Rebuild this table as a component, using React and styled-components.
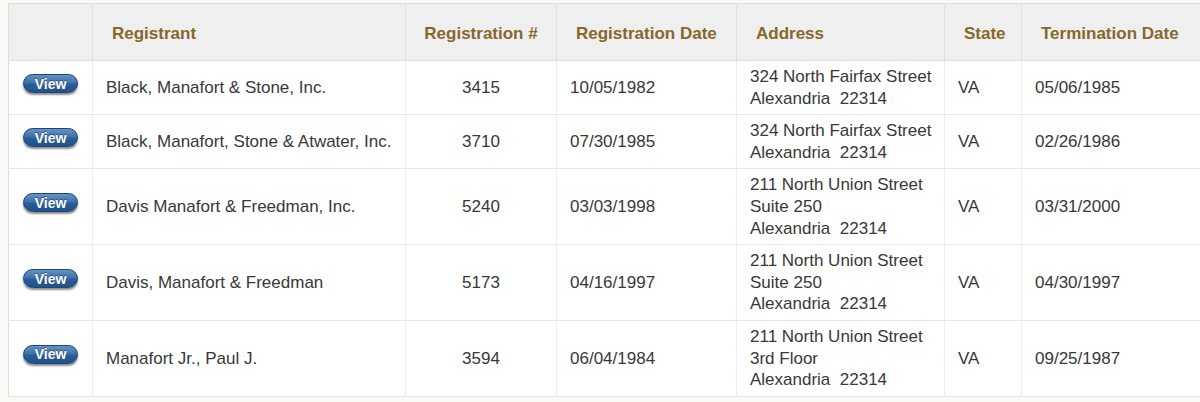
import React from "react";
import styled, { createGlobalStyle } from "styled-components";

const Global = createGlobalStyle`
  html, body { margin: 0; padding: 0; background: #f9f9f6; overflow: hidden; }
  body { font-family: "Liberation Sans", Arial, Helvetica, sans-serif; }
`;

const Page = styled.div`
  padding: 3px 0 0 8px;
  width: 1220px;
`;

const Table = styled.table`
  border-collapse: collapse;
  table-layout: fixed;
  width: 1210px;
  background: #fff;
  border-top: 1px solid #dcdcdc;
  border-left: 1px solid #dcdcdc;
`;

const Th = styled.th`
  background: #efefef;
  color: #86692a;
  font-weight: bold;
  font-size: 17px;
  height: 53px;
  padding: 3px 0 0 ${(p) => (p.$center ? 0 : 19)}px;
  text-align: ${(p) => (p.$center ? "center" : "left")};
  vertical-align: middle;
  border-right: 1px solid #e2e2e2;
  border-bottom: 1px solid #dedede;
  white-space: nowrap;
`;

const Td = styled.td`
  color: #383838;
  font-size: 17px;
  line-height: 21.6px;
  padding: 5px 0 5px ${(p) => (p.$center ? 0 : 13)}px;
  text-align: ${(p) => (p.$center ? "center" : "left")};
  vertical-align: middle;
  border-right: 1px solid #ececec;
  border-bottom: 1px solid #e6e6e6;
  white-space: pre;
`;

const ViewCell = styled.td`
  text-align: center;
  vertical-align: middle;
  padding: 0 0 8px 0;
  border-right: 1px solid #ececec;
  border-bottom: 1px solid #e6e6e6;
`;

const ViewButton = styled.button`
  display: inline-block;
  width: 55px;
  height: 19px;
  padding: 0;
  border-radius: 10px;
  border: 1px solid #1e4677;
  background: linear-gradient(#6592c4 0%, #3f72aa 45%, #2a5d98 55%, #21508a 100%);
  box-shadow: 0 2px 2px rgba(0, 0, 0, 0.45);
  color: #fff;
  font-family: "Liberation Sans", Arial, sans-serif;
  font-weight: bold;
  font-size: 14px;
  line-height: 16px;
  text-shadow: 0 -1px 0 rgba(0, 0, 0, 0.35);
  cursor: pointer;
`;

const rows = [
  {
    name: "Black, Manafort & Stone, Inc.",
    num: "3415",
    date: "10/05/1982",
    addr: ["324 North Fairfax Street", "Alexandria  22314"],
    state: "VA",
    term: "05/06/1985",
  },
  {
    name: "Black, Manafort, Stone & Atwater, Inc.",
    num: "3710",
    date: "07/30/1985",
    addr: ["324 North Fairfax Street", "Alexandria  22314"],
    state: "VA",
    term: "02/26/1986",
  },
  {
    name: "Davis Manafort & Freedman, Inc.",
    num: "5240",
    date: "03/03/1998",
    addr: ["211 North Union Street", "Suite 250", "Alexandria  22314"],
    state: "VA",
    term: "03/31/2000",
  },
  {
    name: "Davis, Manafort & Freedman",
    num: "5173",
    date: "04/16/1997",
    addr: ["211 North Union Street", "Suite 250", "Alexandria  22314"],
    state: "VA",
    term: "04/30/1997",
  },
  {
    name: "Manafort Jr., Paul J.",
    num: "3594",
    date: "06/04/1984",
    addr: ["211 North Union Street", "3rd Floor", "Alexandria  22314"],
    state: "VA",
    term: "09/25/1987",
  },
];

export default function App() {
  return (
    <>
      <Global />
      <Page>
        <Table>
          <colgroup>
            <col style={{ width: 84 }} />
            <col style={{ width: 313 }} />
            <col style={{ width: 151 }} />
            <col style={{ width: 180 }} />
            <col style={{ width: 208 }} />
            <col style={{ width: 77 }} />
            <col style={{ width: 197 }} />
          </colgroup>
          <thead>
            <tr>
              <Th />
              <Th>Registrant</Th>
              <Th $center>Registration #</Th>
              <Th>Registration Date</Th>
              <Th>Address</Th>
              <Th>State</Th>
              <Th>Termination Date</Th>
            </tr>
          </thead>
          <tbody>
            {rows.map((r) => (
              <tr key={r.num}>
                <ViewCell>
                  <ViewButton>View</ViewButton>
                </ViewCell>
                <Td>{r.name}</Td>
                <Td $center>{r.num}</Td>
                <Td>{r.date}</Td>
                <Td>{r.addr.join("\n")}</Td>
                <Td>{r.state}</Td>
                <Td>{r.term}</Td>
              </tr>
            ))}
          </tbody>
        </Table>
      </Page>
    </>
  );
}
